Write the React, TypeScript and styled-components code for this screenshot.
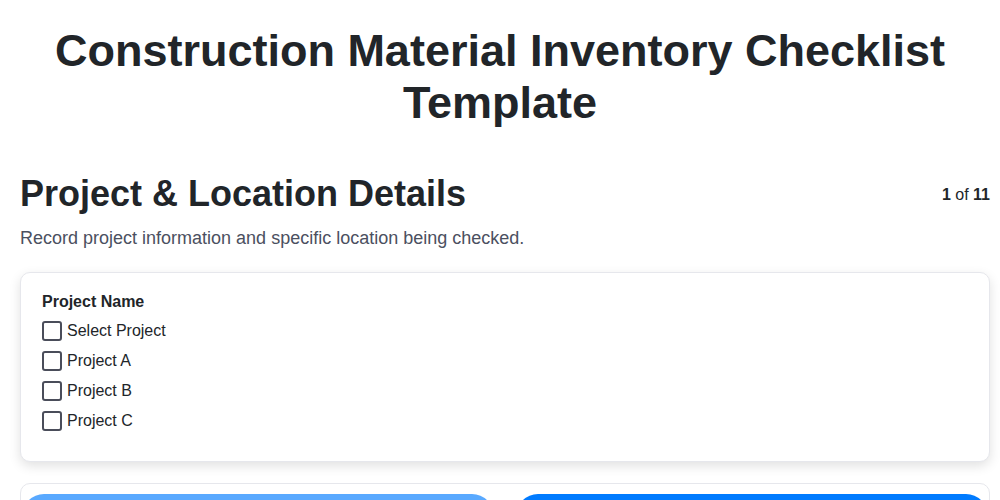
import styled, { createGlobalStyle } from 'styled-components'

const GlobalStyle = createGlobalStyle`
    body {
        margin: 0;
        background: #ffffff;
        font-family: "Liberation Sans", Arial, sans-serif;
        color: #212529;
    }
`

const Page = styled.div`
    padding: 25px 10px 20px;
`

const Title = styled.h1`
    margin: 0 0 43px;
    font-size: 45px;
    line-height: 52px;
    font-weight: 700;
    text-align: center;
`

const Step = styled.section`
    padding-left: 10px;
`

const StepHeader = styled.div`
    display: flex;
    justify-content: space-between;
    align-items: center;
`

const StepTitle = styled.h2`
    margin: 0;
    font-size: 36px;
    line-height: 1.2;
    font-weight: 700;
`

const Counter = styled.div`
    font-size: 16px;
    line-height: 19px;
    padding-top: 2px;

    b {
        font-weight: 700;
    }
`

const Description = styled.p`
    margin: 10px 0 20px;
    font-size: 18px;
    line-height: 27px;
    color: #4b5060;
`

const Card = styled.div`
    border: 1px solid #e6e7ec;
    border-radius: 10px;
    background: #ffffff;
    box-shadow: 0 4px 12px rgba(0, 0, 0, 0.12);
`

const FieldCard = styled(Card)`
    padding: 19px 21px 25px;
    margin-bottom: 21px;
`

const FieldLabel = styled.div`
    font-size: 16px;
    line-height: 19px;
    font-weight: 700;
    margin-bottom: 5px;
`

const Option = styled.label`
    display: flex;
    align-items: center;
    gap: 5px;
    height: 30px;
    font-size: 16px;
`

const Box = styled.input.attrs({ type: 'checkbox' })`
    appearance: none;
    margin: 0;
    width: 20px;
    height: 20px;
    border: 2px solid #4a4d5a;
    border-radius: 3px;
    background: #ffffff;
`

const NavCard = styled(Card)`
    display: grid;
    grid-template-columns: 1fr 1fr;
    gap: 22px;
    padding: 10px 1px;
    box-shadow: none;
`

const NavButton = styled.button<{ $disabled?: boolean }>`
    height: 46px;
    border: none;
    border-radius: 22px;
    background: #007bff;
    color: #ffffff;
    font-family: inherit;
    font-size: 16px;
    opacity: ${p => (p.$disabled ? 0.65 : 1)};
`

const options = ['Select Project', 'Project A', 'Project B', 'Project C']

export default function App() {
    return (
        <>
            <GlobalStyle />
            <Page>
                <Title>Construction Material Inventory Checklist Template</Title>
                <Step>
                    <StepHeader>
                        <StepTitle>Project &amp; Location Details</StepTitle>
                        <Counter>
                            <b>1</b> of <b>11</b>
                        </Counter>
                    </StepHeader>
                    <Description>Record project information and specific location being checked.</Description>
                    <FieldCard>
                        <FieldLabel>Project Name</FieldLabel>
                        {options.map(o => (
                            <Option key={o}>
                                <Box />
                                {o}
                            </Option>
                        ))}
                    </FieldCard>
                    <NavCard>
                        <NavButton $disabled>Previous</NavButton>
                        <NavButton>Next</NavButton>
                    </NavCard>
                </Step>
            </Page>
        </>
    )
}
